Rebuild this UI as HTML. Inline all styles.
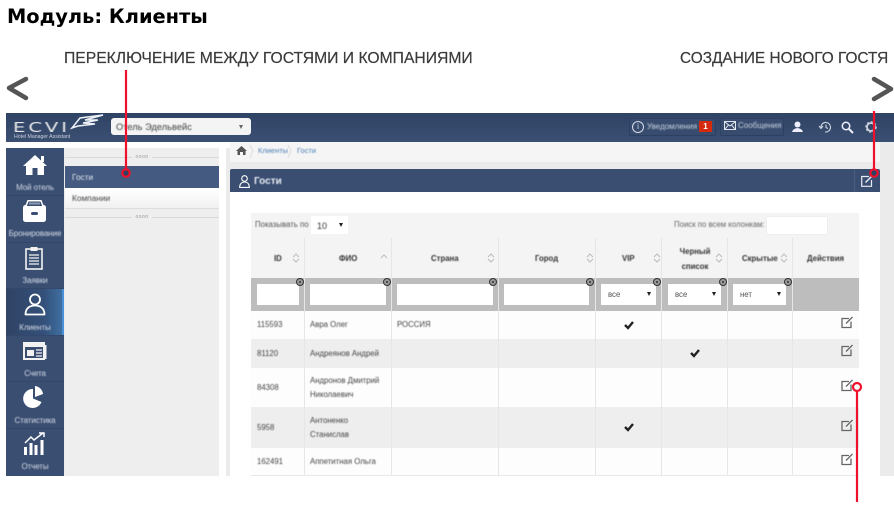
<!DOCTYPE html>
<html><head><meta charset="utf-8">
<style>
html,body{margin:0;padding:0;background:#fff}
#p{position:relative;width:894px;height:510px;overflow:hidden;background:#fff;font-family:"Liberation Sans",sans-serif}
#p div,#p span.a{position:absolute}
.t{white-space:nowrap;font-size:7.8px;color:#444;filter:blur(.45px);line-height:14px}
.c{text-align:center}
.b{font-weight:bold;color:#333}
.nav{left:6px;width:58px;text-align:center;color:#d4dbe6;font-size:8px;white-space:nowrap;filter:blur(.4px);letter-spacing:-.1px}
.ln{width:1px;background:#e6e6e6}
.fl{height:21px;top:284px;background:#fff}
.sel{font-size:7.8px;color:#555;line-height:21px;padding-left:7px;box-sizing:border-box}
.sel:after{content:"";position:absolute;right:5px;top:8px;border-left:2.5px solid transparent;border-right:2.5px solid transparent;border-top:4px solid #222}
.x{width:8px;height:8px;top:278px;border-radius:50%;background:#999;border:1.5px solid #333;box-sizing:border-box}
.x:after{content:"";position:absolute;left:1.5px;top:1.5px;width:2px;height:2px;background:#333;border-radius:50%}
svg{position:absolute;overflow:visible}
.lab{font-size:15.7px;color:#3a3a3a;white-space:nowrap;line-height:20px;filter:blur(.3px);-webkit-text-stroke:.2px #3a3a3a}
</style></head><body>
<div id="p">
<div style="left:7px;top:5px;font:bold 19.4px 'DejaVu Sans',sans-serif;color:#000;white-space:nowrap;line-height:23px">Модуль: Клиенты</div>
<div class="lab" style="left:64px;top:49px">ПЕРЕКЛЮЧЕНИЕ МЕЖДУ ГОСТЯМИ И КОМПАНИЯМИ</div>
<div class="lab" style="left:680px;top:49px;font-size:15.4px">СОЗДАНИЕ НОВОГО ГОСТЯ</div>
<svg style="left:0;top:0" width="894" height="110"><path d="M26 79 L9 88 L26 98" fill="none" stroke="#555" stroke-width="4.5" stroke-linecap="round" stroke-linejoin="round"/><path d="M874 79 L891 89 L874 99" fill="none" stroke="#555" stroke-width="4.5" stroke-linecap="round" stroke-linejoin="round"/></svg>

<!-- textures -->
<div style="left:6px;top:142px;width:888px;height:334px;background:#ebebeb"></div>
<!-- top bar -->
<div style="left:6px;top:113px;width:888px;height:29px;background:linear-gradient(#2f4365,#3b4f72)"></div>
<div style="left:13px;top:122px;font:13px 'DejaVu Sans',sans-serif;color:#e8e8e8;letter-spacing:2px;transform:scaleX(1.5);transform-origin:left;line-height:13px;filter:blur(.3px)">ECVI</div>
<div style="left:14px;top:135px;font-size:5.2px;color:#c8cfda;white-space:nowrap;line-height:5px;filter:blur(.3px)">Hotel Manager Assistant</div>
<svg style="left:70px;top:113px" width="36" height="20"><path d="M2 15 L10 5 L33 2 L15 7 L28 7 L13 10 L25 11 L8 13 Z" fill="none" stroke="#eef2f8" stroke-width="1.500"/></svg>
<div style="left:111px;top:118px;width:140px;height:17px;background:#f4f4f4;border-radius:3px"></div>
<div class="t" style="left:116px;top:120px;font-size:9.300px;color:#444">Отель Эдельвейс</div>
<div style="left:239px;top:125px;border-left:2.5px solid transparent;border-right:2.5px solid transparent;border-top:4px solid #666"></div>

<div style="left:629px;top:118px;width:87px;height:18px;background:#384c6f;border:1px solid #2d4061;border-radius:2px;box-sizing:border-box"></div>
<div style="left:720px;top:118px;width:64px;height:18px;background:#384c6f;border:1px solid #2d4061;border-radius:2px;box-sizing:border-box"></div>
<div style="left:632px;top:121px;width:12px;height:12px;border:1px solid #d8dde6;border-radius:50%;box-sizing:border-box;color:#d8dde6;font-size:8px;line-height:10px;text-align:center">i</div>
<div class="t" style="left:647px;top:120px;font-size:8px;color:#c8d0dc">Уведомления</div>
<div style="left:699px;top:121px;width:13px;height:11px;background:#d62a10;color:#fff;font:bold 8px/11px 'Liberation Sans',sans-serif;text-align:center">1</div>
<svg style="left:724px;top:121px" width="12" height="9"><rect x=".5" y=".5" width="11" height="8" fill="none" stroke="#dfe3ea"/><path d="M1 1 L6 5 L11 1 M1 8 L4.5 4 M11 8 L7.500 4" fill="none" stroke="#dfe3ea"/></svg>
<div class="t" style="left:738px;top:119px;font-size:8px;color:#c8d0dc">Сообщения</div>
<svg style="left:792px;top:121px" width="11" height="12"><circle cx="5.500" cy="3.500" r="3" fill="#eef"/><path d="M0 11 Q1 7.500 5.500 7 Q10 7.500 11 11 Z" fill="#eef"/></svg>
<svg style="left:819px;top:121px" width="13" height="12"><path d="M2 7 A4.800 4.800 0 1 1 6 11 M0 5 L2 7.500 L4 5 M7 3.500 V6.500 L9 7.500" fill="none" stroke="#cdd4df" stroke-width="1.1"/></svg>
<svg style="left:841px;top:121px" width="13" height="13"><circle cx="5" cy="5" r="3.700" fill="none" stroke="#eef" stroke-width="1.500"/><path d="M8 8 L12 12" stroke="#eef" stroke-width="2"/></svg>
<svg style="left:865px;top:121px" width="12" height="12"><circle cx="6" cy="6" r="4" fill="none" stroke="#cdd4df" stroke-width="1.800"/><circle cx="6" cy="6" r="5.200" fill="none" stroke="#cdd4df" stroke-width="1.100" stroke-dasharray="2 2"/></svg>

<!-- sidebar -->
<div style="left:0;top:142px;width:6px;height:368px;background:#fff"></div>
<div style="left:6px;top:142px;width:224px;height:6px;background:#fff"></div>
<div style="left:6px;top:148px;width:58px;height:328px;background:#3a4e72"></div>
<div style="left:6px;top:289px;width:58px;height:46px;background:linear-gradient(90deg,#2f4364,#34507a 65%,#3f73a6)"></div>
<div style="left:62px;top:289px;width:2px;height:46px;background:#4a90d8"></div>
<div style="left:6px;top:195px;width:58px;height:1px;background:#34476a"></div>
<div style="left:6px;top:242px;width:58px;height:1px;background:#34476a"></div>
<div style="left:6px;top:288px;width:58px;height:1px;background:#34476a"></div>
<div style="left:6px;top:335px;width:58px;height:1px;background:#34476a"></div>
<div style="left:6px;top:381px;width:58px;height:1px;background:#34476a"></div>
<div style="left:6px;top:428px;width:58px;height:1px;background:#34476a"></div>

<svg style="left:23px;top:154px" width="24" height="22"><path d="M12 1 L24 12 H21 V21 H14.500 V14 H9.500 V21 H3 V12 H0 Z" fill="#fff"/><rect x="18" y="2" width="3" height="6" fill="#fff"/></svg>
<div class="nav" style="top:183px">Мой отель</div>
<svg style="left:23px;top:200px" width="23" height="23"><rect x="0" y="5" width="23" height="17" rx="2.500" fill="#fff"/><path d="M3 6 L5 0.800 H18 L20 6" fill="#3a4e72" stroke="#fff" stroke-width="1.500"/><rect x="6" y="2.500" width="11" height="2" fill="#8e9bb0"/><rect x="8" y="12" width="7" height="3" rx="1.500" fill="#3a4e72"/></svg>
<div class="nav" style="top:229px">Бронирование</div>
<svg style="left:25px;top:246px" width="19" height="24"><rect x="1" y="3" width="16" height="20" fill="none" stroke="#f2f2f2" stroke-width="1.600"/><rect x="5.500" y="1" width="7" height="4" fill="#f2f2f2"/><path d="M4 9 H14 M4 12 H14 M4 15 H14 M4 18 H14" stroke="#f2f2f2" stroke-width="1.200"/></svg>
<div class="nav" style="top:276px">Заявки</div>
<svg style="left:24px;top:293px" width="22" height="23"><circle cx="11" cy="6.500" r="5" fill="none" stroke="#fff" stroke-width="1.800"/><path d="M1.500 21.500 C1.500 15 6 12.500 11 12.500 C16 12.500 20.500 15 20.500 21.500 Z" fill="none" stroke="#fff" stroke-width="1.800" stroke-linejoin="round"/></svg>
<div class="nav" style="top:323px">Клиенты</div>
<svg style="left:23px;top:342px" width="24" height="18"><rect x="1" y="1" width="20" height="16" fill="none" stroke="#f2f2f2" stroke-width="2"/><rect x="21" y="3" width="2.500" height="14" fill="#f2f2f2"/><rect x="2" y="2" width="18" height="3" fill="#f2f2f2"/><rect x="4" y="8" width="7" height="6" fill="#f2f2f2"/><path d="M13 8 H19 M13 11 H19 M13 14 H19" stroke="#f2f2f2" stroke-width="1.200"/></svg>
<div class="nav" style="top:369px">Счета</div>
<svg style="left:22px;top:386px" width="22" height="23"><path d="M11 3 V12.500 L19.500 16 A9.500 9.500 0 1 1 11 3 Z" fill="#fff"/><path d="M13 0 A9 9 0 0 1 21 8 L13 11 Z" fill="#fff"/></svg>
<div class="nav" style="top:416px">Статистика</div>
<svg style="left:24px;top:432px" width="21" height="24"><path d="M1 11 L7 5 L10 8 L19 1 M15 1 H20 V5" fill="none" stroke="#fff" stroke-width="1.500"/><path d="M1.500 15 V23 M7 11 V23 M12 13 V23 M18 8 V23" stroke="#fff" stroke-width="3"/></svg>
<div class="nav" style="top:462px">Отчеты</div>

<!-- second col -->
<div style="left:65px;top:148px;width:154px;height:328px;background:#eeeeee"></div>
<div style="left:65px;top:157px;width:154px;height:1px;background:#d9d9d9"></div>
<div style="left:65px;top:217px;width:154px;height:1px;background:#d9d9d9"></div>
<div style="left:132px;top:155px;width:20px;height:4px;background:#eee;font-size:5px;line-height:4px;color:#999;letter-spacing:.5px;text-align:center">oooo</div>
<div style="left:132px;top:215px;width:20px;height:4px;background:#eee;font-size:5px;line-height:4px;color:#999;letter-spacing:.5px;text-align:center">oooo</div>
<div style="left:65px;top:166px;width:154px;height:22px;background:#445a80"></div>
<div class="t" style="left:72px;top:170px;font-size:8.300px;color:#e4e8ef">Гости</div>
<div style="left:65px;top:188px;width:154px;height:21px;background:linear-gradient(#fff,#f1f1f1);border-bottom:1px solid #ddd;box-sizing:border-box"></div>
<div class="t" style="left:72px;top:191px;font-size:8.300px;color:#444">Компании</div>
<div style="left:219px;top:142px;width:7px;height:334px;background:#fff"></div>

<!-- breadcrumbs -->
<div style="left:230px;top:142px;width:650px;height:20px;background:#f5f5f5"></div>
<svg style="left:236px;top:146px" width="11" height="9"><path d="M5.500 0 L11 5 H9.500 V9 H7 V6 H4 V9 H1.500 V5 H0 Z" fill="#555"/></svg>
<div class="t" style="left:258px;top:144px;font-size:7.500px;color:#4a7fb5">Клиенты</div>
<div class="t" style="left:297px;top:144px;font-size:7.500px;color:#4a7fb5">Гости</div>
<svg style="left:250px;top:144px" width="60" height="16"><path d="M0 1 L3 7 L0 14 M38 1 L41 7 L38 14" fill="none" stroke="#ddd"/></svg>

<!-- panel -->
<div style="left:230px;top:169px;width:650px;height:23px;background:#3a4e72;border-radius:2px 2px 0 0"></div>
<svg style="left:239px;top:175px" width="11" height="13"><circle cx="5.500" cy="3.500" r="2.800" fill="none" stroke="#fff" stroke-width="1.100"/><path d="M.7 12.400 C.7 8.500 3 7 5.500 7 C8 7 10.300 8.500 10.300 12.400 Z" fill="none" stroke="#fff" stroke-width="1.100"/></svg>
<div class="t" style="left:254px;top:175px;font-size:10px;font-weight:bold;color:#e8ecf2">Гости</div>
<div style="left:854px;top:169px;width:1px;height:23px;background:#4a5e82"></div>
<svg style="left:861px;top:175px" width="12" height="12"><path d="M8 1.500 H.7 V11.300 H10.500 V5" fill="none" stroke="#e8ecf2" stroke-width="1.200"/><path d="M4.500 7.500 L11 1" stroke="#e8ecf2" stroke-width="1.400"/></svg>
<div style="left:230px;top:192px;width:650px;height:284px;background:#fff"></div>

<!-- table -->
<div style="left:251px;top:213px;width:608px;height:65px;background:#f4f4f4"></div>
<div class="t" style="left:255px;top:218px;color:#555">Показывать по</div>
<div style="left:311px;top:216px;width:37px;height:18px;background:#fff"></div>
<div class="t" style="left:317px;top:219px;font-size:9px;color:#333">10</div>
<div style="left:339px;top:223px;border-left:2.500px solid transparent;border-right:2.500px solid transparent;border-top:4px solid #222"></div>
<div class="t" style="left:674px;top:218px;color:#666">Поиск по всем колонкам:</div>
<div style="left:766px;top:216px;width:62px;height:19px;background:#fff;border:1px solid #eee;box-sizing:border-box"></div>

<div style="left:251px;top:278px;width:608px;height:33px;background:#bdbdbd"></div>
<div style="left:251px;top:311px;width:608px;height:28px;background:#fdfdfd"></div>
<div style="left:251px;top:339px;width:608px;height:29px;background:#eeeeee"></div>
<div style="left:251px;top:368px;width:608px;height:39px;background:#fdfdfd"></div>
<div style="left:251px;top:407px;width:608px;height:41px;background:#eeeeee"></div>
<div style="left:251px;top:448px;width:608px;height:28px;background:#fdfdfd"></div>
<div style="left:251px;top:475px;width:608px;height:1px;background:#e8e8e8"></div>

<div class="ln" style="left:304px;top:238px;height:238px"></div>
<div class="ln" style="left:391px;top:238px;height:238px"></div>
<div class="ln" style="left:498px;top:238px;height:238px"></div>
<div class="ln" style="left:595px;top:238px;height:238px"></div>
<div class="ln" style="left:661px;top:238px;height:238px"></div>
<div class="ln" style="left:727px;top:238px;height:238px"></div>
<div class="ln" style="left:792px;top:238px;height:238px"></div>

<div class="t b" style="left:274px;top:252px">ID</div>
<div class="t b" style="left:339px;top:252px">ФИО</div>
<div class="t b" style="left:431px;top:252px">Страна</div>
<div class="t b" style="left:535px;top:252px">Город</div>
<div class="t b" style="left:622px;top:252px">VIP</div>
<div class="t b c" style="left:670px;top:245px;width:50px;line-height:14.500px">Черный<br>список</div>
<div class="t b" style="left:742px;top:252px">Скрытые</div>
<div class="t b" style="left:807px;top:252px">Действия</div>

<svg style="left:240px;top:200px" width="654" height="80"><g fill="none" stroke="#bbb" stroke-width="1"><path d="M53 57 L56 54 L59 57 M53 59 L56 62 L59 59"/><path d="M248 57 L251 54 L254 57 M248 59 L251 62 L254 59"/><path d="M347 57 L350 54 L353 57 M347 59 L350 62 L353 59"/><path d="M414 57 L417 54 L420 57 M414 59 L417 62 L420 59"/><path d="M476 57 L479 54 L482 57 M476 59 L479 62 L482 59"/><path d="M541 57 L544 54 L547 57 M541 59 L544 62 L547 59"/><path d="M141 58 L144 55 L147 58"/></g></svg>

<!-- filters -->
<div class="fl" style="left:257px;width:42px"></div>
<div class="fl" style="left:310px;width:76px"></div>
<div class="fl" style="left:397px;width:96px"></div>
<div class="fl" style="left:504px;width:85px"></div>
<div class="fl sel" style="left:601px;width:55px">все</div>
<div class="fl sel" style="left:668px;width:53px">все</div>
<div class="fl sel" style="left:733px;width:53px">нет</div>
<div class="x" style="left:296px"></div>
<div class="x" style="left:383px"></div>
<div class="x" style="left:489px"></div>
<div class="x" style="left:586px"></div>
<div class="x" style="left:653px"></div>
<div class="x" style="left:719px"></div>
<div class="x" style="left:784px"></div>

<!-- rows -->
<div class="t" style="left:257px;top:318px">115593</div>
<div class="t" style="left:310px;top:318px">Авра Олег</div>
<div class="t" style="left:397px;top:318px">РОССИЯ</div>
<div class="t" style="left:257px;top:347px">81120</div>
<div class="t" style="left:310px;top:347px">Андреянов Андрей</div>
<div class="t" style="left:257px;top:381px">84308</div>
<div class="t" style="left:310px;top:374px">Андронов Дмитрий</div>
<div class="t" style="left:310px;top:388px">Николаевич</div>
<div class="t" style="left:257px;top:421px">5958</div>
<div class="t" style="left:310px;top:414px">Антоненко</div>
<div class="t" style="left:310px;top:428px">Станислав</div>
<div class="t" style="left:257px;top:455px">162491</div>
<div class="t" style="left:310px;top:455px">Аппетитная Ольга</div>

<svg style="left:0;top:0" width="894" height="510">
<g fill="none" stroke="#222" stroke-width="2.400">
<path d="M625 325 L628 328 L633 322"/>
<path d="M691 353 L694 356 L699 350"/>
<path d="M625 427 L628 430 L633 424"/>
</g>
<g fill="none" stroke="#666" stroke-width="1.300">
<path d="M849 318.500 H842 V327.500 H851 V321.500 M846 323.500 L852.500 317"/>
<path d="M849 346.500 H842 V355.500 H851 V349.500 M846 351.500 L852.500 345"/>
<path d="M849 381.500 H842 V390.500 H851 V384.500 M846 386.500 L852.500 380"/>
<path d="M849 421.500 H842 V430.500 H851 V424.500 M846 426.500 L852.500 420"/>
<path d="M849 455.500 H842 V464.500 H851 V458.500 M846 460.500 L852.500 454"/>
</g>
<!-- annotations -->
<g fill="none" stroke="#f0102c">
<path d="M126 70 V170" stroke-width="2.200"/>
<circle cx="126" cy="173" r="3.700" stroke-width="2.200" fill="#2f4060"/>
<path d="M874 111 V169" stroke-width="2.200"/>
<circle cx="874" cy="173" r="3.700" stroke-width="2.200" fill="#2f4060"/>
<path d="M857 391 V502" stroke-width="2.200"/>
<circle cx="857" cy="387" r="4" stroke-width="2.200" fill="#fff"/>
</g>
</svg>
</div>
</body></html>
